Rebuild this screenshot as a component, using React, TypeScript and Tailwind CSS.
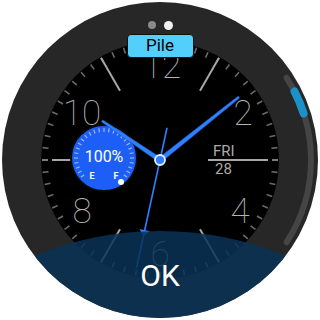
const C = 160;

const pt = (r: number, deg: number) => {
  const a = (deg * Math.PI) / 180;
  return { x: C + r * Math.sin(a), y: C - r * Math.cos(a) };
};

const arc = (r: number, from: number, to: number) => {
  const a = pt(r, from);
  const b = pt(r, to);
  return `M ${a.x} ${a.y} A ${r} ${r} 0 0 1 ${b.x} ${b.y}`;
};

const hand = (deg: number, len: number, base: number, tip: number) => {
  const p = pt(len, deg);
  const n = ((deg + 90) * Math.PI) / 180;
  const nx = Math.sin(n);
  const ny = -Math.cos(n);
  return [
    [C + nx * base, C + ny * base],
    [p.x + nx * tip, p.y + ny * tip],
    [p.x - nx * tip, p.y - ny * tip],
    [C - nx * base, C - ny * base],
  ]
    .map((q) => q.join(","))
    .join(" ");
};

const Dial = () => {
  const ticks = Array.from({ length: 60 }, (_, i) => i);
  const longHours = [30, 150, 210, 330];
  const gaugeTicks = Array.from({ length: 27 }, (_, i) => -130 + i * 10);
  const g = { x: 104, y: 158 };

  return (
    <svg width="320" height="320" viewBox="0 0 320 320" className="absolute inset-0">
      <defs>
        <clipPath id="watch">
          <circle cx="160" cy="160" r="158" />
        </clipPath>
      </defs>
      <circle cx="160" cy="160" r="158" fill="#272727" />
      <circle cx="160" cy="160" r="119" fill="#000" />

      {/* minute ticks */}
      {ticks.map((i) => {
        const a = pt(112, i * 6);
        const b = pt(118, i * 6);
        return (
          <line key={i} x1={a.x} y1={a.y} x2={b.x} y2={b.y} stroke={i % 15 === 0 ? "#9a9a9a" : "#6a6a6a"} strokeWidth="1.6" />
        );
      })}
      {longHours.map((d) => {
        const a = pt(80, d);
        const b = pt(118, d);
        return <line key={d} x1={a.x} y1={a.y} x2={b.x} y2={b.y} stroke="#a8a8a8" strokeWidth="2" />;
      })}
      <line x1="52" y1="160" x2="72" y2="160" stroke="#a8a8a8" strokeWidth="2" />
      <line x1="208" y1="160" x2="268" y2="160" stroke="#a8a8a8" strokeWidth="2" />

      {/* numerals */}
      <g fontFamily="Roboto, 'Liberation Sans', sans-serif" fontWeight="100" fontSize="35" fill="#b4b4b4" textAnchor="middle">
        <text x="162" y="78">12</text>
        <text x="243" y="125">2</text>
        <text x="240" y="223">4</text>
        <text x="160" y="266">6</text>
        <text x="82" y="223">8</text>
        <text x="82" y="125">10</text>
      </g>

      {/* date */}
      <g fontFamily="Roboto, 'Liberation Sans', sans-serif" fontSize="15" fill="#aaaaaa">
        <text x="213" y="156">FRI</text>
        <text x="215" y="174">28</text>
      </g>

      {/* battery gauge */}
      <circle cx={g.x} cy={g.y} r="33" fill="#1d5ff6" stroke="#0a0a0a" strokeWidth="2" />
      {gaugeTicks.map((d) => {
        const a = (d * Math.PI) / 180;
        return (
          <line
            key={d}
            x1={g.x + 26 * Math.sin(a)}
            y1={g.y - 26 * Math.cos(a)}
            x2={g.x + 30 * Math.sin(a)}
            y2={g.y - 30 * Math.cos(a)}
            stroke="#ffffff"
            strokeOpacity="0.55"
            strokeWidth="1.2"
          />
        );
      })}
      <text x="104" y="162" textAnchor="middle" fontFamily="Roboto, 'Liberation Sans', sans-serif" fontSize="16" fill="#fff">
        100%
      </text>
      <g fontFamily="Roboto, 'Liberation Sans', sans-serif" fontSize="9" fontWeight="700" fill="#fff" textAnchor="middle">
        <text x="92" y="179">E</text>
        <text x="116" y="179">F</text>
      </g>
      <circle cx="121" cy="182" r="3" fill="#fff" />

      {/* hands */}
      <polygon points={hand(304, 70, 2.4, 1.2)} fill="#2f80ff" stroke="#1b4fa8" strokeWidth="0.5" />
      <polygon points={hand(51.4, 101, 2.4, 1.2)} fill="#2f80ff" stroke="#1b4fa8" strokeWidth="0.5" />
      {(() => {
        const a = pt(33, 12.3);
        const b = pt(110, 192.3);
        const m = pt(72, 192.3);
        const m2 = pt(78, 192.3);
        const l = pt(72, 188);
        const r = pt(72, 196.6);
        return (
          <g>
            <line x1={a.x} y1={a.y} x2={b.x} y2={b.y} stroke="#2f7fff" strokeWidth="1.6" />
            <polygon points={`${l.x},${l.y} ${r.x},${r.y} ${m2.x},${m2.y}`} fill="#2f7fff" />
            <circle cx={m.x} cy={m.y} r="0" />
          </g>
        );
      })()}
      <circle cx="160" cy="160" r="5" fill="#2f7fff" stroke="#e6eeff" strokeWidth="1.8" />

      {/* bottom action area */}
      <g clipPath="url(#watch)">
        <circle cx="160" cy="561" r="330" fill="rgb(8,50,86)" fillOpacity="0.85" />
      </g>

      {/* scroll indicator */}
      <path d={arc(151, 57, 123)} stroke="#454545" strokeWidth="6" strokeLinecap="round" fill="none" />
      <path d={arc(151, 63, 72)} stroke="#1b90c9" strokeWidth="8" strokeLinecap="round" fill="none" />
    </svg>
  );
};

export default function App() {
  return (
    <div className="w-[320px] h-[320px] bg-white relative overflow-hidden font-['Roboto','Liberation_Sans',sans-serif]">
      <Dial />
      <div className="relative h-full flex flex-col items-center justify-between">
        <div className="flex flex-col items-center pt-[21px] gap-1">
          <div className="flex gap-2">
            <span className="w-2 h-2 rounded-full bg-[#8a8a8a]" />
            <span className="w-[9px] h-[9px] -mt-[0.5px] rounded-full bg-[#f0f0f0]" />
          </div>
          <button className="w-[67px] h-[24px] rounded-[4px] bg-[#52cffb] border border-[#111] text-black text-[17px] leading-none flex items-center justify-center">
            Pile
          </button>
        </div>
        <div className="text-white text-[30px] leading-[30px] mb-[29px]">OK</div>
      </div>
    </div>
  );
}
